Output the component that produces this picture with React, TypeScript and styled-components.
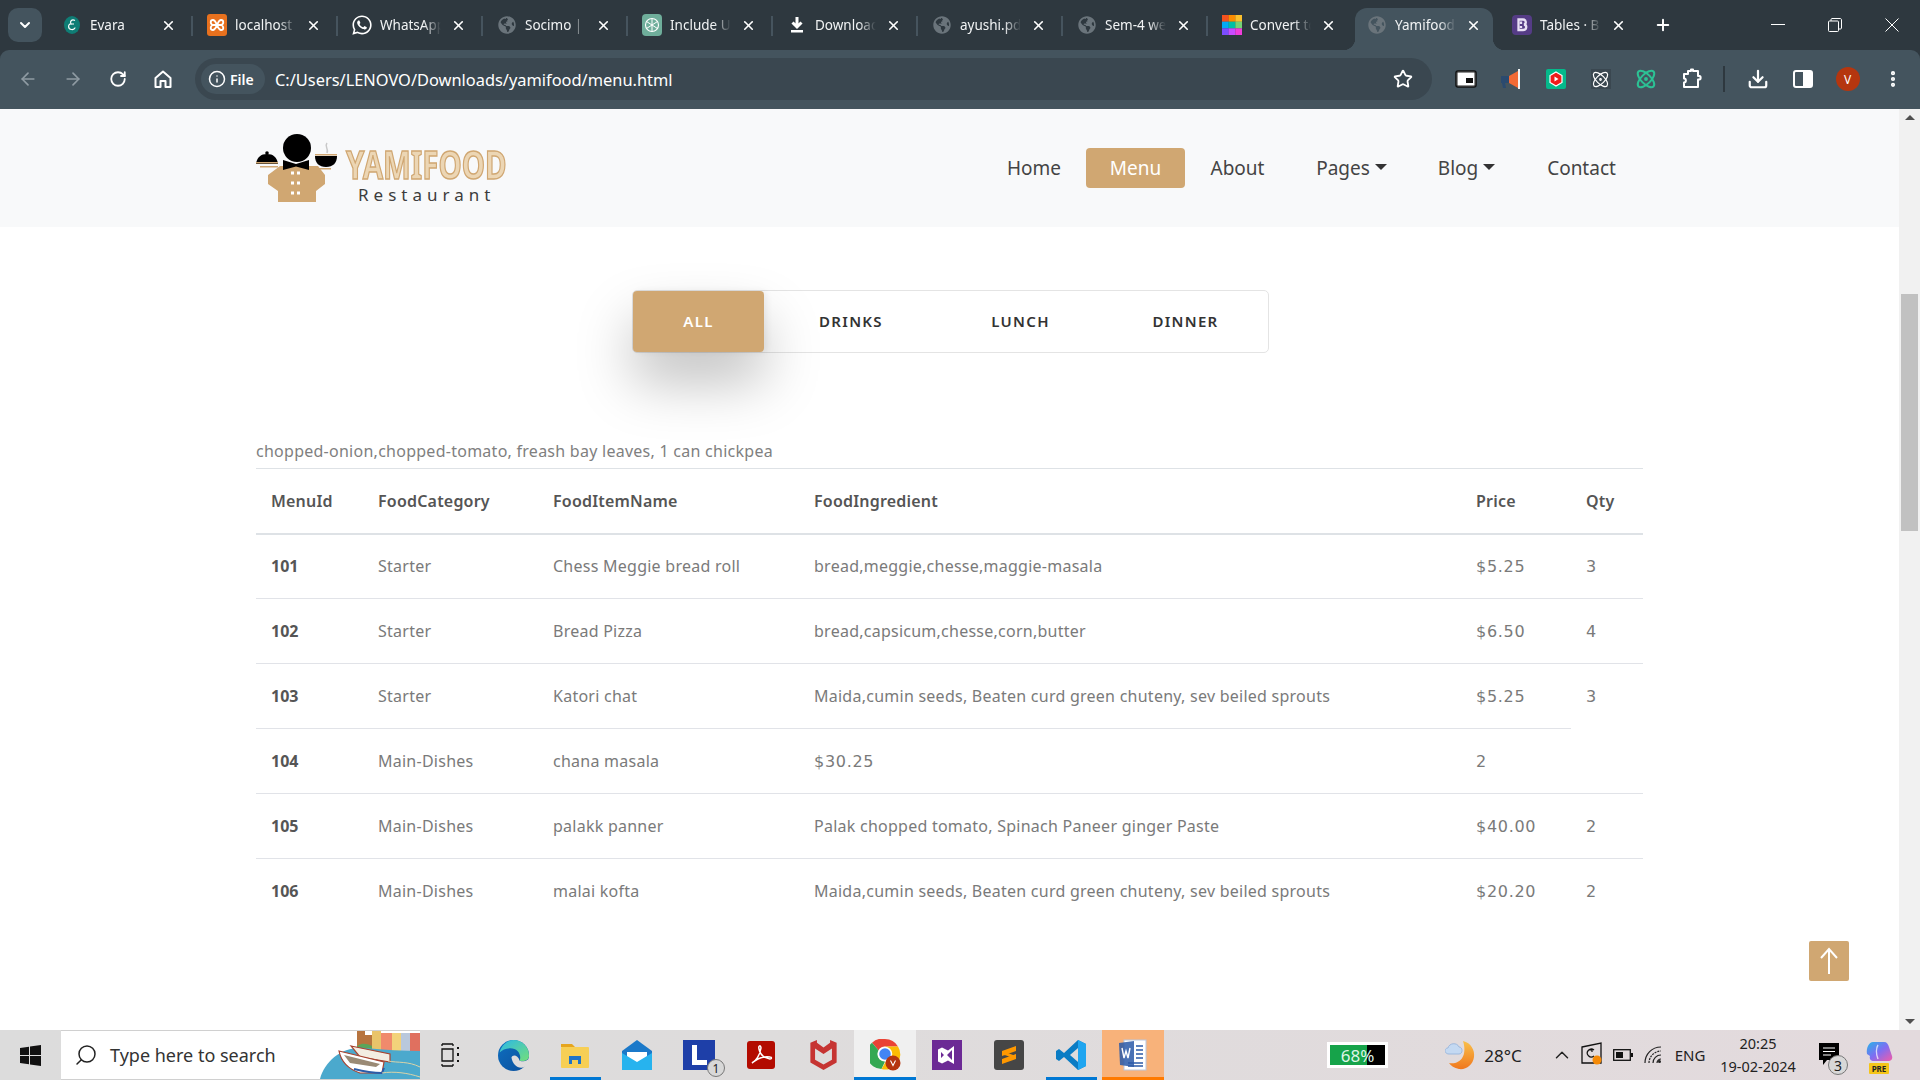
import React from "react";
import styled, { createGlobalStyle } from "styled-components";
import {
  ArrowLeft, ArrowRight, RotateCw, Info, Star, Download, MoreVertical, X, Plus, ChevronDown,
  Atom, ChevronUp, Search,
} from "lucide-react";
import { FaWhatsapp, FaGlobeAmericas } from "react-icons/fa";

const Global = createGlobalStyle`
  html, body { margin: 0; padding: 0; height: 100%; overflow: hidden; background: #fff; }
  * { box-sizing: border-box; }
`;

const Root = styled.div`
  height: 100vh; display: flex; flex-direction: column; overflow: hidden; background: #2e383f;
  font-family: "Noto Sans", sans-serif;
`;

/* ---------- browser tabs ---------- */
const TabStrip = styled.div`
  height: 50px; flex: none; display: flex; padding-left: 8px; background: #2e383f; color: #fff;
`;
const TabMenu = styled.div`
  width: 34px; height: 34px; margin: 8px 8px 0 0; border-radius: 10px; background: #44545e;
  display: flex; align-items: center; justify-content: center;
`;
const Tab = styled.div<{ $active?: boolean }>`
  width: 145px; height: 42px; margin-top: 8px; display: flex; align-items: center; position: relative;
  padding: 0 0 8px 12px; isolation: isolate;
  ${(p) =>
    p.$active
      ? `
    &::before {
      content: ""; position: absolute; z-index: -1; left: 0; right: 7px; top: 0; bottom: 0;
      background: #44545e; border-radius: 12px 12px 0 0;
    }
    &::after {
      content: ""; position: absolute; z-index: -1; left: -12px; right: -5px; bottom: 0; height: 12px;
      background:
        radial-gradient(circle at 0 0, transparent 12px, #44545e 12.5px) left bottom / 12px 12px no-repeat,
        radial-gradient(circle at 100% 0, transparent 12px, #44545e 12.5px) right bottom / 12px 12px no-repeat;
    }`
      : ""}
`;
const TabIcon = styled.div`
  width: 20px; height: 20px; flex: none; display: flex; align-items: center; justify-content: center;
`;
const TabTitle = styled.div`
  width: 61px; margin: 0 2px 0 8px; font-size: 13.5px; white-space: nowrap; overflow: hidden; color: #f1f3f4;
  -webkit-mask-image: linear-gradient(90deg, #000 72%, transparent 100%);
  mask-image: linear-gradient(90deg, #000 72%, transparent 100%);
`;
const TabClose = styled.div`
  width: 16px; height: 16px; margin-left: 7px; flex: none; display: flex; align-items: center; justify-content: center;
`;
const TabSep = styled.div`
  position: absolute; right: 2px; top: 8px; width: 2px; height: 20px; background: #46545e;
`;
const NewTab = styled.div`
  width: 20px; height: 20px; margin: 15px 0 0 8px; display: flex; align-items: center; justify-content: center;
`;
const WindowControls = styled.div`
  margin-left: auto; height: 50px; display: flex; align-items: center; padding-right: 0;
`;
const WinBtn = styled.div`
  width: 57px; height: 50px; display: flex; align-items: center; justify-content: center;
`;

/* ---------- browser toolbar ---------- */
const Toolbar = styled.div`
  height: 59px; flex: none; display: flex; align-items: center; padding: 0 0 1px 5px; background: #44545e;
  color: #fff; border-radius: 9px 9px 0 0;
`;
const ToolSlot = styled.div<{ $dim?: boolean }>`
  width: 45px; height: 40px; flex: none; display: flex; align-items: center; justify-content: center;
  color: ${(p) => (p.$dim ? "#8f9ba3" : "#ffffff")};
`;
const Omnibox = styled.div`
  width: 1237px; height: 42px; margin: 0 11px 0 10px; border-radius: 21px; background: #3a4750; flex: none;
  display: flex; align-items: center; padding: 0 19px 0 6px;
`;
const FileChip = styled.div`
  width: 64px; height: 30px; border-radius: 15px; background: #44545e; display: flex; align-items: center;
  padding-left: 7px; gap: 4px; font-size: 14px; font-weight: 600; color: #fff; flex: none;
`;
const Url = styled.div`
  margin-left: 10px; font-size: 16.4px; color: #fff; white-space: nowrap; flex: 1;
`;
const ToolSep = styled.div`
  width: 2px; height: 26px; margin: 0 10px 0 10px; background: #2e383f; flex: none;
`;
const Avatar = styled.div`
  width: 24px; height: 24px; border-radius: 50%; background: #b5360f; color: #fff; font-size: 12px;
  display: flex; align-items: center; justify-content: center;
`;
const ExtTile = styled.div`
  width: 20px; height: 20px; background: #3a4750; display: flex; align-items: center; justify-content: center;
`;

/* ---------- page ---------- */
const Viewport = styled.div`
  flex: 1; min-height: 0; display: flex; position: relative;
`;
const Page = styled.div`
  flex: 1; min-width: 0; background: #fff; color: #7a7a7a;
`;
const NavBar = styled.div`
  height: 118px; background: #f8f9fa;
`;
const Container = styled.div`
  width: 1387px; margin: 0 0 0 256px; height: 100%; display: flex; align-items: center; justify-content: space-between;
`;
const Logo = styled.div`
  display: flex; align-items: flex-start; height: 70px;
`;
const LogoText = styled.div`
  margin-left: 8px; padding-top: 12px; display: flex; flex-direction: column; width: 170px;
`;
const LogoName = styled.div`
  font-size: 39px; line-height: 38px; font-weight: 700; color: #ecd6b4; -webkit-text-stroke: 1.5px #d0a772;
  white-space: nowrap; transform: scaleX(0.755); transform-origin: left center; width: 220px;
`;
const LogoSub = styled.div`
  font-size: 17px; line-height: 18px; color: #3c3c3c; letter-spacing: 5px; margin: 3px 0 0 12px; white-space: nowrap;
`;
const NavList = styled.div`
  display: flex; align-items: center;
`;
const NavLink = styled.div<{ $active?: boolean; $w: number }>`
  width: ${(p) => p.$w}px; height: 40px; border-radius: 4px; font-size: 19px; display: flex; align-items: center;
  justify-content: center; gap: 5px;
  color: ${(p) => (p.$active ? "#ffffff" : "#444444")};
  background: ${(p) => (p.$active ? "#d0a772" : "transparent")};
`;
const Caret = styled.span`
  width: 0; height: 0; border-left: 6px solid transparent; border-right: 6px solid transparent;
  border-top: 6px solid #333; margin-top: -2px;
`;
const FilterWrap = styled.div`
  display: flex; justify-content: flex-start; margin: 63px 0 0 632px;
`;
const FilterGroup = styled.div`
  width: 637px; height: 63px; border: 1px solid #e4e4e4; border-radius: 5px; display: flex; align-items: center;
  background: #fff;
`;
const FilterBtn = styled.div<{ $active?: boolean; $w: number }>`
  width: ${(p) => p.$w}px; height: 61px; padding-bottom: 2px; display: flex; align-items: center; justify-content: center;
  font-size: 15px; font-weight: 600; letter-spacing: 1.3px; border-radius: 4px;
  color: ${(p) => (p.$active ? "#fff" : "#333")};
  background: ${(p) => (p.$active ? "#d0a772" : "transparent")};
  box-shadow: ${(p) => (p.$active ? "0 30px 55px rgba(0,0,0,.25), 3px 0 6px rgba(0,0,0,.06)" : "none")};
`;
const TableWrap = styled.div`
  width: 1387px; margin: 86px 0 0 256px;
`;
const Ingredients = styled.div`
  height: 29px; font-size: 16px; line-height: 24px; color: #808080; letter-spacing: 0.26px;
`;
const Table = styled.table`
  width: 1387px; table-layout: fixed; border-collapse: collapse;
`;
const Th = styled.th`
  height: 65px; padding: 0 15px; text-align: left; font-size: 16px; font-weight: 600; color: #555;
  letter-spacing: 0.2px; border-top: 1px solid #dee2e6; border-bottom: 2px solid #dee2e6;
`;
const Td = styled.td<{ $num?: boolean; $id?: boolean }>`
  height: 65px; padding: 0 15px; border-top: 1px solid #e1e3e8; white-space: nowrap;
  font-family: ${(p) => (p.$num ? '"DejaVu Sans", sans-serif' : '"Noto Sans", sans-serif')};
  font-size: 16px;
  letter-spacing: ${(p) => (p.$num ? "0.7px" : p.$id ? "0" : "0.25px")};
  font-weight: ${(p) => (p.$id ? 700 : 400)};
  color: ${(p) => (p.$id ? "#555" : "#7a7a7a")};
`;
const Scrollbar = styled.div`
  width: 21px; flex: none; background: #f1f1f1; display: flex; flex-direction: column; align-items: center;
  justify-content: space-between; position: relative; color: #505050; padding: 6px 0;
`;
const Thumb = styled.div`
  position: absolute; top: 185px; left: 2px; width: 17px; height: 237px; background: #c1c1c1;
`;
const ArrowTri = styled.div<{ $up?: boolean }>`
  width: 0; height: 0; border-left: 5px solid transparent; border-right: 5px solid transparent;
  ${(p) => (p.$up ? "border-bottom: 5px solid #505050;" : "border-top: 5px solid #505050;")}
`;
const BackTop = styled.div`
  position: absolute; left: 1809px; top: 832px; width: 40px; height: 40px; border-radius: 2px; background: #d0a772;
  display: flex; align-items: center; justify-content: center; color: #fff;
`;

/* ---------- windows taskbar ---------- */
const Taskbar = styled.div`
  height: 50px; flex: none; display: flex; align-items: stretch; color: #1b1b1b;
  background: linear-gradient(90deg, #dcdcdc 0%, #dedcdc 40%, #e3dadd 100%);
`;
const StartBtn = styled.div`
  width: 61px; display: flex; align-items: center; justify-content: center; flex: none;
`;
const SearchBox = styled.div`
  width: 359px; flex: none; background: #fff; border: 1px solid #d0d0d0; border-width: 1px 0; display: flex;
  align-items: center; padding-left: 13px; position: relative; overflow: hidden; font-size: 18px; color: #333;
`;
const SearchText = styled.span`
  margin-left: 12px;
`;
const Harbor = styled.svg`
  position: absolute; right: 0; top: 0;
`;
const AppSlot = styled.div<{ $mode?: "open" | "focus" | "word" }>`
  width: 62px; flex: none; display: flex; align-items: center; justify-content: center; position: relative;
  background: ${(p) => (p.$mode === "focus" ? "#f0f0f0" : p.$mode === "word" ? "#f8b27a" : "transparent")};
  &::after {
    content: "";
    display: ${(p) => (p.$mode ? "block" : "none")};
    position: absolute; bottom: 0; height: 3px;
    left: ${(p) => (p.$mode === "open" ? "6px" : "0")};
    right: ${(p) => (p.$mode === "open" ? "5px" : "0")};
    background: ${(p) => (p.$mode === "word" ? "#ff7a00" : "#0078d4")};
  }
`;
const CountBadge = styled.div`
  position: absolute; right: 5px; bottom: 3px; width: 18px; height: 18px; border-radius: 50%;
  background: #d8d8d8; border: 1px solid #777; font-size: 12px; color: #222; display: flex;
  align-items: center; justify-content: center;
`;
const BatteryWidget = styled.div`
  width: 61px; height: 26px; margin: 12px 0 0 163px; flex: none; border: 3px solid #fff; display: flex; position: relative;
  background: #000; color: #dff5e6; font-size: 17px; align-items: center; justify-content: center;
`;
const BatteryFill = styled.div`
  position: absolute; left: 0; top: 0; bottom: 0; width: 68%; background: #16a34a;
`;
const BatteryLabel = styled.span`
  position: relative;
`;
const Tray = styled.div`
  margin-left: auto; display: flex; align-items: stretch; padding-right: 18px;
`;
const TraySlot = styled.div<{ $w: number }>`
  width: ${(p) => p.$w}px; flex: none; display: flex; align-items: center; justify-content: center;
  position: relative; font-size: 15px; color: #222; white-space: nowrap;
`;
const Temp = styled.span`
  font-size: 17px;
`;
const Clock = styled.div`
  display: flex; flex-direction: column; align-items: center; font-size: 14.5px; line-height: 23px; color: #222;
`;
const Weather = styled.div`
  display: flex; align-items: stretch;
`;

/* ---------- drawn icons ---------- */
const Globe = () => <FaGlobeAmericas size={18} color="#6a747b" />;
const EvaraIcon = () => (
  <svg width="16" height="20" viewBox="0 0 16 20"><ellipse cx="8" cy="10" rx="8" ry="9" fill="#0f7d75" />
    <path d="M11 5.500C8 4 5.500 6 7 9c-3-.5-3.500 5 .5 5.500 2 .3 3.500-1 3.500-2M7 9h3" fill="none" stroke="#fff" strokeWidth="1.200" /></svg>
);
const XamppIcon = () => (
  <svg width="20" height="22" viewBox="0 0 20 22"><rect width="20" height="22" rx="3" fill="#e8711e" />
    <path d="M6 6c-3 0-3 4 0 5 3 0 5 0 8 0 3-1 3-5 0-5-2 0-3 3-4 5s-2 5-4 5c-3 0-3-4 0-5m8 0c3 1 3 5 0 5-2 0-3-3-4-5S8 6 6 6" fill="none" stroke="#fff" strokeWidth="1.800" /></svg>
);
const OpenAiIcon = () => (
  <svg width="20" height="22" viewBox="0 0 20 22"><rect width="20" height="22" rx="4" fill="#6fae9b" />
    <circle cx="10" cy="11" r="6.500" fill="none" stroke="#fff" strokeWidth="1.100" />
    <path d="M10 4.500v13M4.500 7.500l11 7M15.500 7.500l-11 7" stroke="#fff" strokeWidth="1" /></svg>
);
const DownloadFav = () => (
  <svg width="16" height="20" viewBox="0 0 16 20"><path d="M8 2v9M3.500 7.500 8 12l4.500-4.500" fill="none" stroke="#fff" strokeWidth="3" /><rect x="2" y="15" width="12" height="2.500" fill="#fff" /></svg>
);
const ConvertIcon = () => (
  <svg width="20" height="20" viewBox="0 0 3 3">
    {["#f4511e", "#fb8c00", "#fbc02d", "#03a9f4", "#00bfa5", "#76d275", "#7c4dff", "#c94bff", "#f03ddb"].map((c, i) => (
      <rect key={c} x={i % 3} y={Math.floor(i / 3)} width="1.020" height="1.020" fill={c} />
    ))}
  </svg>
);
const BootstrapIcon = () => (
  <svg width="20" height="20" viewBox="0 0 20 20"><rect width="20" height="20" rx="4" fill="#553c86" />
    <path d="M6.500 4.500h4.500c3.500 0 3.500 4.500 1 5 3.200.5 3 5.500-1 5.500H6.500zM9 6.500v2.500M9 11v2" fill="none" stroke="#e8e0f5" strokeWidth="2.300" /></svg>
);
const Pip = () => (
  <svg width="22" height="18" viewBox="0 0 22 18"><rect x="1" y="1" width="20" height="16" rx="2" fill="#fff" stroke="#111" strokeWidth="1.500" /><rect x="2" y="2" width="18" height="14" rx="1" fill="#fff" stroke="#222" /><rect x="11" y="8" width="7" height="5" fill="#111" /></svg>
);
const Megaphone = () => (
  <svg width="22" height="24" viewBox="0 0 22 24"><path d="M1 9h8v7H5l1 5H3l-1-5H1z" fill="#2b4a6f" /><path d="M9 9l9-5v17l-9-5z" fill="#f26a35" /><rect x="18" y="2" width="2" height="20" fill="#f2f2f2" /></svg>
);
const YtIcon = () => (
  <svg width="20" height="20" viewBox="0 0 20 20"><rect width="20" height="20" rx="2" fill="#05b98b" /><path d="M10 3l6 3.500v7L10 17l-6-3.500v-7z" fill="#f01a1a" stroke="#fff" strokeWidth="1.200" /><path d="M8.500 7.500l4 2.500-4 2.500z" fill="#fff" /></svg>
);
const AtomGreen = () => <Atom size={22} color="#2cc194" strokeWidth={2.2} />;
const PuzzleIcon = () => (
  <svg width="22" height="22" viewBox="0 0 22 22"><path d="M8 3h3v-1.500h2V3h5v5h1.500c1.500 0 1.500 3.500 0 3.500H18v7.500H4v-4.500c2.500 0 2.500-4 0-4V6h4z" fill="none" stroke="#fff" strokeWidth="2" strokeLinejoin="round" /></svg>
);
const SidePanel = () => (
  <svg width="20" height="18" viewBox="0 0 20 18"><rect x="1" y="1" width="18" height="16" rx="2" fill="none" stroke="#fff" strokeWidth="2" /><rect x="10" y="1" width="9" height="16" fill="#fff" /></svg>
);
const ChefLogo = () => (
  <svg width="82" height="70" viewBox="0 0 82 70">
    <path d="M24 33H62L69 42V51L60 58V69H22V58L12 51V42Z" fill="#d0a772" />
    <circle cx="41" cy="15" r="14" fill="#000" />
    <path d="M27 27l13 4 13-4v10l-13-3.500-13 3.500z" fill="#000" />
    <path d="M0 31c1-7 5-10 11-10s10 3 11 10z" fill="#000" />
    <circle cx="11" cy="20" r="1.800" fill="#000" />
    <rect x="0" y="29" width="22" height="1.500" fill="#d0a772" /><rect x="4" y="33" width="18" height="1.500" fill="#d0a772" />
    <path d="M59 23h22c0 7-4 11-11 11s-11-4-11-11z" fill="#000" />
    <rect x="59" y="21" width="22" height="1.500" fill="#d0a772" /><rect x="60" y="35" width="15" height="1.500" fill="#d0a772" />
    <path d="M71 10c-3 4 2 5 0 10" fill="none" stroke="#c8c8c8" strokeWidth="1.500" />
    {[40, 50, 60].map((y) => (
      <g key={y} fill="#fff"><rect x="35" y={y - 1.500} width="3" height="3" /><rect x="41" y={y - 1.500} width="3" height="3" /></g>
    ))}
  </svg>
);
const WinLogo = () => (
  <svg width="21" height="21" viewBox="0 0 21 21" fill="#111"><path d="M0 3l9-1.300V10H0zM10 1.500L21 0v10H10zM0 11h9v8.300L0 18zM10 11h11v10l-11-1.500z" /></svg>
);
const HarborArt = () => (
  <Harbor width="100" height="48" viewBox="0 0 100 48">
    <path d="M37 0h8v4h8v16H37z" fill="#b7743f" />
    <path d="M35 20c2-8 9-9 17-5l3 6z" fill="#5aa55a" />
    <rect x="52" y="0" width="9" height="20" fill="#e9c46a" /><rect x="61" y="2" width="11" height="18" fill="#f08a6c" />
    <rect x="72" y="2" width="9" height="18" fill="#f3d27a" /><rect x="81" y="2" width="9" height="18" fill="#b9c8dc" /><rect x="90" y="2" width="10" height="18" fill="#e0705f" />
    <path d="M0 48C5 30 22 15 45 17c20 2 38 3 55 3v28z" fill="#4ba9cd" />
    <path d="M31 15l39 8v8l-30-5z" fill="#f3ede2" stroke="#a8432f" strokeWidth="1.200" />
    <path d="M19 20l45 11-2 11H40C28 38 21 30 19 20z" fill="#fff" stroke="#a8432f" strokeWidth="1.200" />
    <path d="M24 24l36 9-4 3-26-4z" fill="#9a8a75" />
    <path d="M34 38c8 2 18 4 28 4l2-5" fill="none" stroke="#2b5ca8" strokeWidth="2" />
    <path d="M68 30c10 2 20 0 32 6M62 42c12-2 26 0 38 4" fill="none" stroke="#d9d3a8" strokeWidth="1" />
  </Harbor>
);
const TaskView = () => (
  <svg width="20" height="24" viewBox="0 0 20 24" fill="none" stroke="#111" strokeWidth="1.300"><path d="M1 1h11M1 23h11M1 6h11v12H1zM12 1v2M1 1v2M1 21v2M12 21v2" /><path d="M17 4v2M17 10v3M17 17v2" strokeWidth="2" /></svg>
);
const EdgeIcon = () => (
  <svg width="31" height="31" viewBox="0 0 30 30">
    <defs>
      <linearGradient id="eb" x1="0" y1="0" x2="1" y2="1"><stop offset="0" stopColor="#0e6fc0" /><stop offset="1" stopColor="#0c4f9c" /></linearGradient>
      <linearGradient id="eg" x1="0" y1="0" x2="1" y2="1"><stop offset="0" stopColor="#2bb8e8" /><stop offset="1" stopColor="#73df7a" /></linearGradient>
    </defs>
    <circle cx="15" cy="15" r="15" fill="url(#eb)" />
    <path d="M13 17c1-3 6-3 8 3 3 1 8 1 9-3 0 5-2 8-4 9-6 3-12-2-13-9z" fill="#dedcdc" />
    <path d="M1.500 12C4 4 10 0 15 0c9 0 15 7 15 15 0 5-5 6-9 5 2-6-2-12-9-12-5 0-8 2-10.500 4z" fill="url(#eg)" />
  </svg>
);
const FolderIcon = () => (
  <svg width="28" height="26" viewBox="0 0 28 26"><path d="M0 2h11l3 3H0z" fill="#e6a51e" /><rect x="0" y="5" width="28" height="21" rx="1" fill="#f7cf55" /><path d="M8 14h12v8h-3v-4h-6v4H8z" fill="#1e73c8" /></svg>
);
const MailIcon = () => (
  <svg width="30" height="30" viewBox="0 0 30 30"><path d="M0 11L15 0l15 11v19H0z" fill="#1b79c9" /><path d="M5 12h20v6l-10 6-10-6z" fill="#fff" /><path d="M0 13l15 9 15-9v17H0z" fill="#27b3ee" /></svg>
);
const LApp = () => (
  <svg width="32" height="30" viewBox="0 0 32 30"><rect width="32" height="30" fill="#1e3fa8" /><path d="M9 5h5v15h10v5H9z" fill="#fff" /></svg>
);
const PdfIcon = () => (
  <svg width="28" height="28" viewBox="0 0 28 28"><rect width="28" height="28" rx="3" fill="#b30b00" /><path d="M5 22c4-2 8-8 9-15 0-3-3-3-2 1 1 5 5 9 11 10 2 0 2-2 0-2-6-1-12 1-18 6z" fill="none" stroke="#fff" strokeWidth="1.500" /></svg>
);
const McAfeeIcon = () => (
  <svg width="27" height="30" viewBox="0 0 28 32"><path d="M0 3l7-3v3l7 5 7-5V0l7 3v21l-14 8-14-8z" fill="#c63432" /><path d="M5 9l9 6 9-6v12l-9 5-9-5z" fill="#dedcdc" /></svg>
);
const ChromeIcon = () => (
  <svg width="31" height="32" viewBox="0 0 31 32">
    <path d="M15 0a15 15 0 0 1 13 7.500H15a7.500 7.500 0 0 0-6.500 3.750L2 3.700A15 15 0 0 1 15 0z" fill="#ea4335" />
    <path d="M2 3.700l6.500 7.550a7.500 7.500 0 0 0 6.500 11.250L11.500 30A15 15 0 0 1 2 3.700z" fill="#34a853" />
    <path d="M28 7.500A15 15 0 0 1 11.500 30l7-12a7.500 7.500 0 0 0-3.500-10.500z" fill="#fbbc05" />
    <circle cx="15" cy="15" r="6.500" fill="#4285f4" stroke="#fff" strokeWidth="1.500" />
    <circle cx="23" cy="24" r="7.500" fill="#b5360f" />
    <path d="M20.500 21.500l2.500 5 2.500-5" fill="none" stroke="#fff" strokeWidth="1.100" />
  </svg>
);
const VsIcon = () => (
  <svg width="30" height="30" viewBox="0 0 30 30"><rect width="30" height="30" fill="#6c2a95" /><path d="M22 6v18l-6-3.500-6 3-4-2V9.500l4-2 6 3zM9 12v6l3-3zM20 10l-5 5 5 5z" fill="#fff" fillRule="evenodd" /></svg>
);
const SublimeIcon = () => (
  <svg width="30" height="30" viewBox="0 0 30 30"><rect width="30" height="30" rx="3" fill="#464646" /><path d="M22 6v5L8 16v-5zM22 14v5L8 24v-5zM8 11l14 5v3L8 14z" fill="#ff9800" /></svg>
);
const VsCodeIcon = () => (
  <svg width="30" height="30" viewBox="0 0 30 30"><path d="M22 0l8 4v22l-8 4L8 17l-5 4-3-2v-8l3-2 5 4z" fill="#0a7cc4" /><path d="M22 0l8 4v22l-8 4z" fill="#1fa5f0" /><path d="M22 8l-8 7 8 7z" fill="#dedcdc" /></svg>
);
const WordIcon = () => (
  <svg width="30" height="32" viewBox="0 0 30 32"><rect x="6" y="1" width="22" height="30" fill="#fff" stroke="#b9c7df" /><path d="M10 24h15M10 27h15M18 7h7M18 11h7M18 15h7M18 19h7" stroke="#2a59a8" strokeWidth="1.500" /><path d="M1 4l15-2v26l-14-2z" fill="#2a59a8" opacity=".85" /><path d="M4 9l2 10 2-7 2 7 2-10" fill="none" stroke="#fff" strokeWidth="1.400" /></svg>
);
const MoonCloud = () => (
  <svg width="30" height="30" viewBox="0 0 30 30"><defs><linearGradient id="mg" x1="0" y1="0" x2="0" y2="1"><stop offset="0" stopColor="#f9c04a" /><stop offset="1" stopColor="#f0781e" /></linearGradient></defs><path d="M18 1c8 2 12 9 11 16-1 8-8 13-15 12-5-1-8-3-10-6 10 2 19-6 14-22z" fill="url(#mg)" /><path d="M4 14c-5 0-5-6-1-6 1-5 9-6 11-1 4 0 4 7 0 7z" fill="#c4d9f2" stroke="#9db9de" /></svg>
);
const MeetIcon = () => (
  <svg width="22" height="26" viewBox="0 0 22 26"><path d="M1 5l19-4v20H1z" fill="none" stroke="#111" strokeWidth="1.300" /><path d="M13 8a4 4 0 1 0 0 6M8 8h3v2" fill="none" stroke="#111" strokeWidth="1.200" /><circle cx="16" cy="18" r="4.500" fill="#f58a07" /></svg>
);
const BatteryTray = () => (
  <svg width="20" height="12" viewBox="0 0 20 12"><rect x=".7" y=".7" width="16.600" height="10.600" fill="none" stroke="#111" strokeWidth="1.300" /><rect x="3" y="3" width="7" height="6" fill="#111" /><rect x="18" y="4" width="2" height="4" fill="#111" /></svg>
);
const WifiFan = () => (
  <svg width="18" height="18" viewBox="0 0 18 18" fill="none" stroke="#222" strokeWidth="1.200">
    <path d="M1 17C1 8 8 1 17 1" /><path d="M5 17C5 10.500 10.500 5 17 5" strokeDasharray="2 1" /><path d="M9 17c0-4.500 3.500-8 8-8" /><path d="M13 17c0-2 2-4 4-4" />
    <circle cx="15.500" cy="15.500" r="1.500" fill="#222" stroke="none" />
  </svg>
);
const NotifIcon = () => (
  <svg width="22" height="24" viewBox="0 0 22 24"><path d="M0 0h20v17H8l-4 5v-5H0z" fill="#000" /><path d="M4 5h12M4 8.500h12M4 12h8" stroke="#fff" strokeWidth="1.200" /></svg>
);
const CopilotIcon = () => (
  <svg width="28" height="30" viewBox="0 0 28 30">
    <defs><linearGradient id="cp" x1="0" y1="0" x2="1" y2="1"><stop offset="0" stopColor="#27b4e8" /><stop offset=".5" stopColor="#7f6df2" /><stop offset="1" stopColor="#f25ca8" /></linearGradient></defs>
    <path d="M8 2h11c3 0 4 2 5 5l3 9c1 3-1 5-4 5H9c-3 0-5-2-4-5l-3-2C1 8 4 2 8 2z" fill="url(#cp)" />
    <path d="M13 5c-2 3-2 9 0 14" stroke="#fff" strokeWidth="1.500" fill="none" opacity=".7" />
  </svg>
);
const PreTag = styled.span`
  position: absolute; left: 50%; bottom: 6px; margin-left: -10px; width: 20px; height: 11px; background: #f5c518;
  font-size: 8px; line-height: 11px; font-weight: 700; text-align: center; color: #222; border-radius: 1px;
`;
const NotifBadge = styled(CountBadge)`
  right: 8px; bottom: 5px; width: 20px; height: 20px; font-size: 14px;
`;

/* ---------- data ---------- */
const tabs: { title: string; icon: React.ReactNode; active?: boolean }[] = [
  { title: "Evara", icon: <EvaraIcon /> },
  { title: "localhost", icon: <XamppIcon /> },
  { title: "WhatsApp", icon: <FaWhatsapp size={22} color="#fff" /> },
  { title: "Socimo |", icon: <Globe /> },
  { title: "Include U", icon: <OpenAiIcon /> },
  { title: "Downloads", icon: <DownloadFav /> },
  { title: "ayushi.pdf", icon: <Globe /> },
  { title: "Sem-4 web", icon: <Globe /> },
  { title: "Convert to", icon: <ConvertIcon /> },
  { title: "Yamifood", icon: <Globe />, active: true },
  { title: "Tables · B", icon: <BootstrapIcon /> },
];
const links: [string, number][] = [
  ["Home", 104], ["Menu", 99], ["About", 105], ["Pages", 123], ["Blog", 107], ["Contact", 123],
];
const columns: [string, number][] = [
  ["MenuId", 107], ["FoodCategory", 175], ["FoodItemName", 261], ["FoodIngredient", 662], ["Price", 110], ["Qty", 72],
];
const rows: string[][] = [
  ["101", "Starter", "Chess Meggie bread roll", "bread,meggie,chesse,maggie-masala", "$5.25", "3"],
  ["102", "Starter", "Bread Pizza", "bread,capsicum,chesse,corn,butter", "$6.50", "4"],
  ["103", "Starter", "Katori chat", "Maida,cumin seeds, Beaten curd green chuteny, sev beiled sprouts", "$5.25", "3"],
  ["104", "Main-Dishes", "chana masala", "$30.25", "2"],
  ["105", "Main-Dishes", "palakk panner", "Palak chopped tomato, Spinach Paneer ginger Paste", "$40.00", "2"],
  ["106", "Main-Dishes", "malai kofta", "Maida,cumin seeds, Beaten curd green chuteny, sev beiled sprouts", "$20.20", "2"],
];
const apps: { node: React.ReactNode; mode?: "open" | "focus" | "word"; badge?: string }[] = [
  { node: <TaskView /> },
  { node: <EdgeIcon /> },
  { node: <FolderIcon />, mode: "open" },
  { node: <MailIcon /> },
  { node: <LApp />, badge: "1" },
  { node: <PdfIcon /> },
  { node: <McAfeeIcon /> },
  { node: <ChromeIcon />, mode: "focus" },
  { node: <VsIcon /> },
  { node: <SublimeIcon /> },
  { node: <VsCodeIcon />, mode: "open" },
  { node: <WordIcon />, mode: "word" },
];

const SearchGlass = styled(Search)`
  transform: scaleX(-1);
`;

export default function App() {
  return (
    <Root>
      <Global />
      <TabStrip>
        <TabMenu><ChevronDown size={16} strokeWidth={3} /></TabMenu>
        {tabs.map((t, i) => (
          <Tab key={t.title} $active={t.active}>
            <TabIcon>{t.icon}</TabIcon>
            <TabTitle>{t.title}</TabTitle>
            <TabClose><X size={15} strokeWidth={2.6} /></TabClose>
            {!t.active && tabs[i + 1] && !tabs[i + 1].active && <TabSep />}
          </Tab>
        ))}
        <NewTab><Plus size={18} strokeWidth={2.6} /></NewTab>
        <WindowControls>
          <WinBtn><svg width="14" height="2"><rect width="14" height="1" fill="#fff" /></svg></WinBtn>
          <WinBtn><svg width="14" height="14" fill="none" stroke="#fff"><rect x=".5" y="3" width="10" height="10.500" rx="1" /><path d="M3 3V1.500C3 1 3.500.5 4 .5h8c1 0 1.500.5 1.500 1.500v8c0 .5-.5 1-1 1H10.500" /></svg></WinBtn>
          <WinBtn><svg width="14" height="14" stroke="#fff"><path d="M.5.5l13 13M13.500.5l-13 13" /></svg></WinBtn>
        </WindowControls>
      </TabStrip>

      <Toolbar>
        <ToolSlot $dim><ArrowLeft size={20} /></ToolSlot>
        <ToolSlot $dim><ArrowRight size={20} /></ToolSlot>
        <ToolSlot><RotateCw size={18} strokeWidth={2.4} /></ToolSlot>
        <ToolSlot>
          <svg width="20" height="20" viewBox="0 0 20 20" fill="none" stroke="#fff" strokeWidth="2"><path d="M2.500 9L10 2.500 17.500 9v9H12.500v-6h-5v6H2.500z" strokeLinejoin="round" /></svg>
        </ToolSlot>
        <Omnibox>
          <FileChip><Info size={18} />File</FileChip>
          <Url>C:/Users/LENOVO/Downloads/yamifood/menu.html</Url>
          <Star size={20} strokeWidth={2.2} color="#fff" />
        </Omnibox>
        <ToolSlot><Pip /></ToolSlot>
        <ToolSlot><Megaphone /></ToolSlot>
        <ToolSlot><YtIcon /></ToolSlot>
        <ToolSlot><ExtTile><Atom size={19} color="#fff" strokeWidth={1.5} /></ExtTile></ToolSlot>
        <ToolSlot><AtomGreen /></ToolSlot>
        <ToolSlot><PuzzleIcon /></ToolSlot>
        <ToolSep />
        <ToolSlot><Download size={22} strokeWidth={2.4} /></ToolSlot>
        <ToolSlot><SidePanel /></ToolSlot>
        <ToolSlot><Avatar>V</Avatar></ToolSlot>
        <ToolSlot><MoreVertical size={20} strokeWidth={3} /></ToolSlot>
      </Toolbar>

      <Viewport>
        <Page>
          <NavBar>
            <Container>
              <Logo>
                <ChefLogo />
                <LogoText>
                  <LogoName>YAMIFOOD</LogoName>
                  <LogoSub>Restaurant</LogoSub>
                </LogoText>
              </Logo>
              <NavList>
                {links.map(([l, w]) => (
                  <NavLink key={l} $w={w} $active={l === "Menu"}>
                    {l}
                    {(l === "Pages" || l === "Blog") && <Caret />}
                  </NavLink>
                ))}
              </NavList>
            </Container>
          </NavBar>

          <FilterWrap>
            <FilterGroup>
              <FilterBtn $active $w={131}>ALL</FilterBtn>
              <FilterBtn $w={174}>DRINKS</FilterBtn>
              <FilterBtn $w={165}>LUNCH</FilterBtn>
              <FilterBtn $w={165}>DINNER</FilterBtn>
            </FilterGroup>
          </FilterWrap>

          <TableWrap>
            <Ingredients>chopped-onion,chopped-tomato, freash bay leaves, 1 can chickpea</Ingredients>
            <Table>
              <colgroup>
                {columns.map(([name, w]) => <col key={name} width={w} />)}
              </colgroup>
              <thead>
                <tr>{columns.map(([name]) => <Th key={name}>{name}</Th>)}</tr>
              </thead>
              <tbody>
                {rows.map((r) => (
                  <tr key={r[0]}>
                    {r.map((c, i) => (
                      <Td key={i} $id={i === 0} $num={i > 2 && /^[$\d]/.test(c)}>{c}</Td>
                    ))}
                  </tr>
                ))}
              </tbody>
            </Table>
          </TableWrap>
        </Page>
        <Scrollbar>
          <ArrowTri $up />
          <Thumb />
          <ArrowTri />
        </Scrollbar>
        <BackTop>
          <svg width="18" height="28" viewBox="0 0 18 28" fill="none" stroke="#fff" strokeWidth="2"><path d="M9 27V2M1 11l8-9 8 9" /></svg>
        </BackTop>
      </Viewport>

      <Taskbar>
        <StartBtn><WinLogo /></StartBtn>
        <SearchBox>
          <SearchGlass size={24} strokeWidth={1.5} color="#222" />
          <SearchText>Type here to search</SearchText>
          <HarborArt />
        </SearchBox>
        {apps.map((a, i) => (
          <AppSlot key={i} $mode={a.mode}>
            {a.node}
            {a.badge && <CountBadge>{a.badge}</CountBadge>}
          </AppSlot>
        ))}
        <BatteryWidget>
          <BatteryFill />
          <BatteryLabel>68%</BatteryLabel>
        </BatteryWidget>
        <Tray>
          <Weather>
            <TraySlot $w={40}><MoonCloud /></TraySlot>
            <TraySlot $w={46}><Temp>28°C</Temp></TraySlot>
          </Weather>
          <TraySlot $w={21} />
          <TraySlot $w={30}><ChevronUp size={22} strokeWidth={1.6} /></TraySlot>
          <TraySlot $w={30}><MeetIcon /></TraySlot>
          <TraySlot $w={31}><BatteryTray /></TraySlot>
          <TraySlot $w={30}><WifiFan /></TraySlot>
          <TraySlot $w={44}>ENG</TraySlot>
          <TraySlot $w={92}><Clock><span>20:25</span><span>19-02-2024</span></Clock></TraySlot>
          <TraySlot $w={52}><NotifIcon /><NotifBadge>3</NotifBadge></TraySlot>
          <TraySlot $w={46}><CopilotIcon /><PreTag>PRE</PreTag></TraySlot>
        </Tray>
      </Taskbar>
    </Root>
  );
}
